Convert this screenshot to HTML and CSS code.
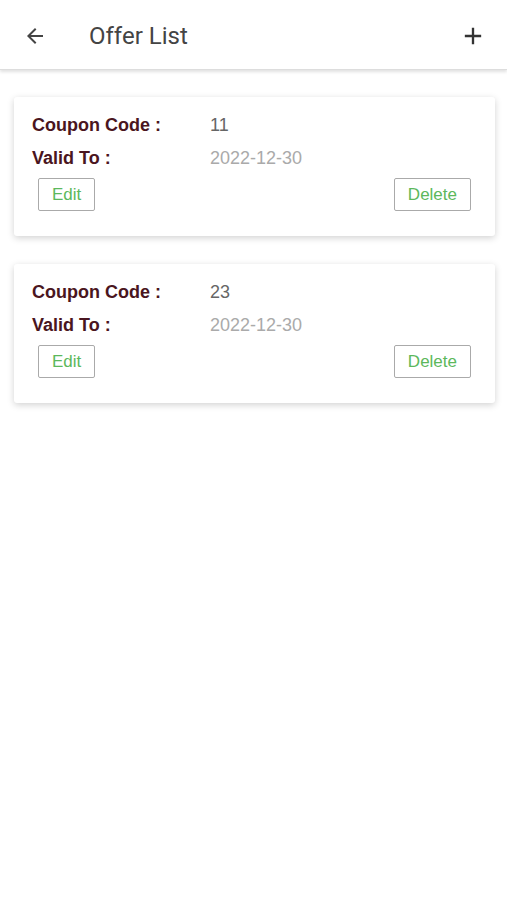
FILE: index.html
```html
<!DOCTYPE html>
<html lang="en">
<head>
    <meta charset="UTF-8">
    <meta name="viewport" content="width=device-width, initial-scale=1.0">
    <title>Offer List</title>
    <link rel="stylesheet" href="styles.css">
</head>
<body>
    <div class="header">
        <svg class="icon" width="24" height="24" viewBox="0 0 24 24">
            <path d="M20 11H7.83l5.59-5.59L12 4l-8 8 8 8 1.41-1.41L7.83 13H20v-2z" fill="#444"/>
        </svg>
        <div class="title">Offer List</div>
        <svg class="icon plus" width="28" height="28" viewBox="0 0 24 24">
            <path d="M19 13h-6v6h-2v-6H5v-2h6V5h2v6h6v2z" fill="#333"/>
        </svg>
    </div>
    <div class="list">
        <div class="card">
            <div class="row">
                <span class="label">Coupon Code :</span>
                <span class="value code">11</span>
            </div>
            <div class="row">
                <span class="label">Valid To :</span>
                <span class="value date">2022-12-30</span>
            </div>
            <div class="actions">
                <button class="btn">Edit</button>
                <button class="btn">Delete</button>
            </div>
        </div>
        <div class="card">
            <div class="row">
                <span class="label">Coupon Code :</span>
                <span class="value code">23</span>
            </div>
            <div class="row">
                <span class="label">Valid To :</span>
                <span class="value date">2022-12-30</span>
            </div>
            <div class="actions">
                <button class="btn">Edit</button>
                <button class="btn">Delete</button>
            </div>
        </div>
    </div>
</body>
</html>
```

FILE: styles.css
```css
* {
    padding: 0;
    margin: 0;
    box-sizing: border-box;
}

body {
    background-color: white;
    font-family: "Liberation Sans", Arial, sans-serif;
}

.header {
    height: 70px;
    display: flex;
    align-items: center;
    padding: 2px 20px 0 23px;
    border-bottom: 1px solid #ddd;
    box-shadow: 0 2px 3px rgba(0, 0, 0, 0.12);
}
.title {
    flex: 1;
    margin-left: 42px;
    font-family: Roboto, sans-serif;
    font-size: 24px;
    color: #444;
}

.list {
    padding: 27px 12px 0 14px;
}
.card {
    background-color: white;
    border-radius: 3px;
    box-shadow: 0 2px 7px rgba(0, 0, 0, 0.18);
    padding: 12px 24px 25px 18px;
    margin-bottom: 28px;
}
.row {
    display: flex;
    align-items: center;
    height: 33px;
}
.label {
    width: 178px;
    font-size: 18px;
    font-weight: bold;
    color: #4a1520;
}
.value {
    font-size: 18px;
}
.code {
    color: #666;
}
.date {
    color: #aaa;
}
.actions {
    display: flex;
    justify-content: space-between;
    padding-left: 6px;
    margin-top: 3px;
}
.btn {
    height: 33px;
    padding: 0 13px;
    font-family: "Liberation Sans", Arial, sans-serif;
    font-size: 17px;
    color: #5cb85c;
    background-color: white;
    border: 1px solid #aaa;
    border-radius: 2px;
}
```
